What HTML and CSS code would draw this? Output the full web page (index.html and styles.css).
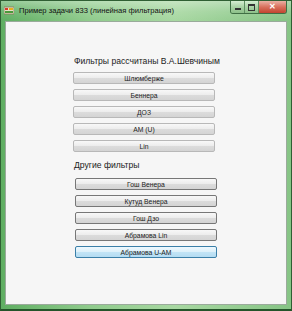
FILE: index.html
```html
<!DOCTYPE html>
<html lang="ru">
<head>
  <meta charset="UTF-8" />
  <title>Пример задачи 833</title>
  <link rel="stylesheet" href="styles.css">
</head>
<body>

<div class="window">
  <div class="titlebar">
    <svg class="app-icon" width="10" height="9" viewBox="0 0 10 9">
      <rect x="0" y="1" width="10" height="7" fill="#e8e0c8" stroke="#8a7a5a" stroke-width="0.8"/>
      <rect x="1" y="2" width="3" height="2" fill="#d83a2a"/>
      <rect x="5" y="2" width="4" height="2" fill="#e8b020"/>
      <rect x="1" y="5" width="8" height="2" fill="#4a9a3a"/>
    </svg>
    <span class="title">Пример задачи 833 (линейная фильтрация)</span>
    <div class="controls">
      <div class="ctl ctl-min"><span></span></div>
      <div class="ctl ctl-max"><span></span></div>
      <div class="ctl ctl-close">✕</div>
    </div>
  </div>

  <div class="client">
    <div class="group group-one">
      <div class="group-label">Фильтры рассчитаны В.А.Шевчиным</div>
      <button class="btn">Шлюмберже</button>
      <button class="btn">Беннера</button>
      <button class="btn">ДОЗ</button>
      <button class="btn">AM (U)</button>
      <button class="btn">Lin</button>
    </div>

    <div class="group group-two">
      <div class="group-label">Другие фильтры</div>
      <button class="btn">Гош Венера</button>
      <button class="btn">Кутуд Венера</button>
      <button class="btn">Гош Дзо</button>
      <button class="btn">Абрамова Lin</button>
      <button class="btn btn-focus">Абрамова U-AM</button>
    </div>
  </div>
</div>

</body>
</html>
```

FILE: styles.css
```css
body {
  margin: 0;
  font-family: "Liberation Sans", Arial, sans-serif;
  background: #fff;
}

.window {
  width: 292px;
  height: 311px;
  box-sizing: border-box;
  display: flex;
  flex-direction: column;
  background: linear-gradient(90deg, #5fae62 0%, #8fcb8c 30%, #a8d8a2 60%, #86c485 100%);
  border: 1px solid #2f5f33;
  border-bottom: 2px solid #24542a;
}

.titlebar {
  height: 19px;
  display: flex;
  align-items: center;
  padding-left: 3px;
  background: linear-gradient(180deg, rgba(255,255,255,0.35) 0%, rgba(255,255,255,0.1) 55%, rgba(0,0,0,0) 100%);
}

.app-icon {
  margin-right: 5px;
}

.title {
  font-size: 7.6px;
  color: #111;
  white-space: nowrap;
}

.controls {
  margin-left: auto;
  margin-right: 4px;
  align-self: flex-start;
  display: flex;
  border: 1px solid #3f6f44;
  border-top: none;
  border-radius: 0 0 3px 3px;
  overflow: hidden;
}

.ctl {
  width: 13px;
  height: 12px;
  display: flex;
  align-items: center;
  justify-content: center;
  background: linear-gradient(180deg, #d6eed3 0%, #a9d2a5 50%, #8cc089 100%);
  border-right: 1px solid #5d8f61;
}

.ctl-min span {
  width: 6px;
  height: 2px;
  margin-top: 4px;
  background: #333;
}

.ctl-max span {
  width: 5px;
  height: 4px;
  border: 1px solid #333;
  border-top-width: 2px;
}

.ctl-close {
  width: 27px;
  border-right: none;
  background: linear-gradient(180deg, #eab1a4 0%, #d9705d 50%, #c24430 100%);
  color: #fff;
  font-size: 8px;
  font-weight: bold;
  line-height: 12px;
}

.client {
  flex: 1;
  margin: 1px 4px 4px 4px;
  background: #f6f6f6;
  border: 1px solid #9aaa9b;
  padding-top: 34px;
  display: flex;
  flex-direction: column;
}

.group {
  display: flex;
  flex-direction: column;
  gap: 5px;
  width: 142px;
}

.group-one {
  margin-left: 67px;
}

.group-two {
  margin-left: 69px;
  margin-top: 8px;
}

.group-label {
  font-size: 8.6px;
  line-height: 11px;
  color: #222;
  white-space: nowrap;
  margin-left: 1px;
  margin-bottom: 0;
}

.group-two .group-label {
  margin-left: -1px;
  margin-bottom: 2px;
}

.btn {
  height: 12px;
  padding: 0;
  font-family: "Liberation Sans", Arial, sans-serif;
  font-size: 6.8px;
  color: #222;
  border: 1px solid #b8b8b8;
  border-radius: 2px;
  background: linear-gradient(180deg, #f8f8f8 0%, #ececec 50%, #dcdcdc 51%, #d4d4d4 100%);
}

.group-two .btn {
  border-color: #777;
}

.btn-focus {
  border-color: #3a7fa8 !important;
  background: linear-gradient(180deg, #eef8fd 0%, #dcf0fa 50%, #c2e4f6 51%, #b4dcf2 100%);
}
```
